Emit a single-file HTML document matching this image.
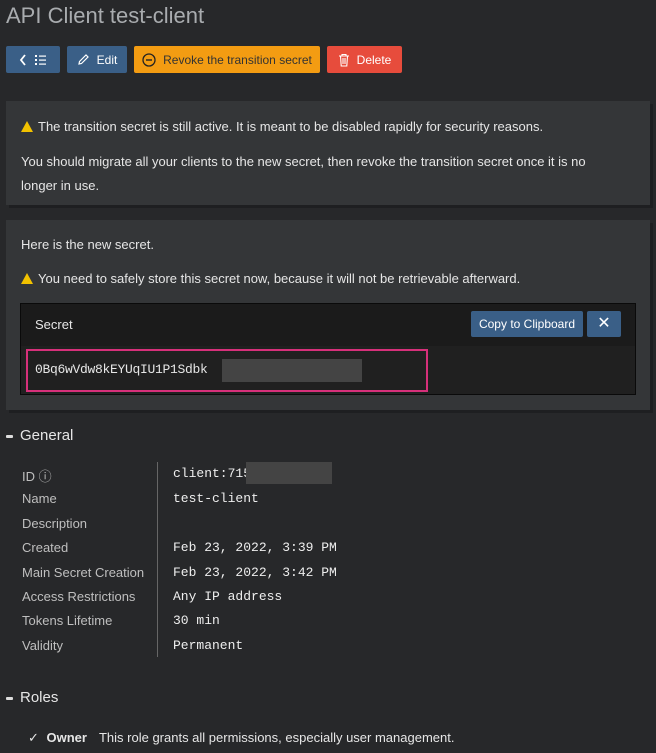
<!DOCTYPE html><html><head><style>
body{margin:0;width:656px;height:753px;background:#27282a;font-family:"Liberation Sans",sans-serif;color:#e6e6e6;font-size:13px;position:relative;overflow:hidden}
.a{position:absolute}
.btn{position:absolute;top:46px;height:27px;border-radius:2px;font-size:12px;display:flex;align-items:center;justify-content:center;gap:7px}
.blue{background:#3a5f87;color:#fff}
.panel{position:absolute;left:6px;width:644px;background:#343638;box-shadow:3px 3px 0 #1e1f21}
.lab{position:absolute;left:22px;color:#bfbfbf;font-size:13px}
.val{position:absolute;left:173px;font-family:"Liberation Mono",monospace;font-size:13px;color:#eee}
.warn{display:inline-block;width:0;height:0;border-left:6px solid transparent;border-right:6px solid transparent;border-bottom:11px solid #f2c200;vertical-align:-1px;margin-right:5px;position:relative}
.blur{position:absolute;background:#444;}
</style></head><body>
<div class="a" style="left:6px;top:3px;font-size:22px;color:#a9acaf">API Client test-client</div>
<div class="btn blue" style="left:6px;width:54px"><svg width="30" height="14" viewBox="0 0 30 14"><path d="M7 2 L3 7 L7 12" stroke="#fff" stroke-width="1.8" fill="none"/><g fill="#fff"><rect x="17" y="2" width="2" height="2"/><rect x="17" y="6" width="2" height="2"/><rect x="17" y="10" width="2" height="2"/><rect x="21" y="2.5" width="7" height="1.2"/><rect x="21" y="6.5" width="7" height="1.2"/><rect x="21" y="10.5" width="7" height="1.2"/></g></svg></div>
<div class="btn blue" style="left:67px;width:60px"><svg width="13" height="13" viewBox="0 0 13 13"><path d="M2 11 L2.5 8.5 L9 2 L11 4 L4.5 10.5 Z" stroke="#fff" stroke-width="1.2" fill="none"/></svg>Edit</div>
<div class="btn" style="left:134px;width:186px;background:#f39c12;color:#333"><svg width="14" height="14"><circle cx="7" cy="7" r="6" stroke="#222" stroke-width="1.3" fill="none"/><rect x="4" y="6.3" width="6" height="1.4" fill="#222"/></svg>Revoke the transition secret</div>
<div class="btn" style="left:327px;width:75px;background:#e74c3c;color:#fff"><svg width="12" height="14"><path d="M1 3 H11 M4 3 V1.5 H8 V3 M2.5 3 L3.2 13 H8.8 L9.5 3 M5 5 V11 M7 5 V11" stroke="#fff" stroke-width="1.1" fill="none"/></svg>Delete</div>

<div class="panel" style="top:101px;height:104px"></div>
<div class="a" style="left:21px;top:119px"><span class="warn"></span>The transition secret is still active. It is meant to be disabled rapidly for security reasons.</div>
<div class="a" style="left:21px;top:150px;width:600px;line-height:24px">You should migrate all your clients to the new secret, then revoke the transition secret once it is no longer in use.</div>

<div class="panel" style="top:220px;height:190px"></div>
<div class="a" style="left:21px;top:237px">Here is the new secret.</div>
<div class="a" style="left:21px;top:271px"><span class="warn"></span>You need to safely store this secret now, because it will not be retrievable afterward.</div>
<div class="a" style="left:20px;top:303px;width:614px;height:90px;background:#202020;border:1px solid #0a0a0a"></div>
<div class="a" style="left:21px;top:304px;width:614px;height:42px;background:#1b1b1b"></div>
<div class="a" style="left:35px;top:317px">Secret</div>
<div class="a" style="left:471px;top:311px;width:112px;height:26px;background:#3a5f87;border-radius:2px;color:#fff;font-size:12px;line-height:26px;text-align:center">Copy to Clipboard</div>
<div class="a" style="left:587px;top:311px;width:34px;height:26px;background:#3a5f87;border-radius:2px;color:#fff;font-size:16px;line-height:26px;text-align:center">✕</div>
<div class="a" style="left:26px;top:349px;width:398px;height:39px;border:2px solid #d6307a"></div>
<div class="a" style="left:35px;top:362px;font-family:'Liberation Mono',monospace;font-size:13px;letter-spacing:-0.3px">0Bq6wVdw8kEYUqIU1P1Sdbk</div>
<div class="blur" style="left:222px;top:359px;width:140px;height:23px"></div>

<div class="a" style="left:6px;top:435px;width:7px;height:3px;background:#ddd;border-radius:1px"></div>
<div class="a" style="left:20px;top:427px;font-size:15px">General</div>
<div class="a" style="left:157px;top:462px;width:1px;height:195px;background:#666"></div>
<div class="lab" style="top:466px">ID ⓘ</div><div class="val" style="top:466px">client:715</div><div class="blur" style="left:246px;top:462px;width:86px;height:22px"></div>
<div class="lab" style="top:491px">Name</div><div class="val" style="top:491px">test-client</div>
<div class="lab" style="top:516px">Description</div>
<div class="lab" style="top:540px">Created</div><div class="val" style="top:540px">Feb 23, 2022, 3:39 PM</div>
<div class="lab" style="top:565px">Main Secret Creation</div><div class="val" style="top:565px">Feb 23, 2022, 3:42 PM</div>
<div class="lab" style="top:589px">Access Restrictions</div><div class="val" style="top:589px">Any IP address</div>
<div class="lab" style="top:613px">Tokens Lifetime</div><div class="val" style="top:613px">30 min</div>
<div class="lab" style="top:638px">Validity</div><div class="val" style="top:638px">Permanent</div>

<div class="a" style="left:6px;top:697px;width:7px;height:3px;background:#ddd;border-radius:1px"></div>
<div class="a" style="left:20px;top:689px;font-size:15px">Roles</div>
<div class="a" style="left:28px;top:730px">✓ <b style="margin-left:4px">Owner</b><span style="margin-left:12px">This role grants all permissions, especially user management.</span></div>
</body></html>
